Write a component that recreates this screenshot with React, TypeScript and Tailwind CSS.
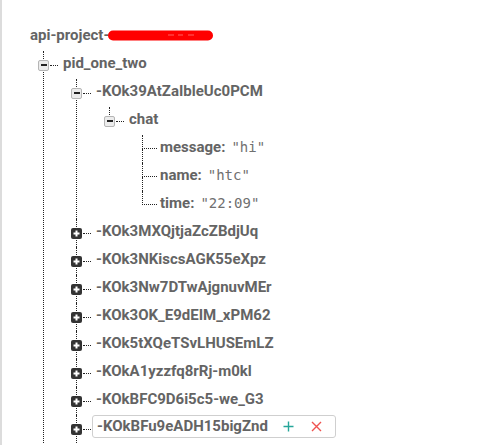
import { ReactNode } from 'react';

type TNode = {
  label: string;
  value?: string;
  open?: boolean;
  editing?: boolean;
  last?: boolean;
  children?: TNode[];
};

const keys = [
  '-KOk3MXQjtjaZcZBdjUq',
  '-KOk3NKiscsAGK55eXpz',
  '-KOk3Nw7DTwAjgnuvMEr',
  '-KOk3OK_E9dEIM_xPM62',
  '-KOk5tXQeTSvLHUSEmLZ',
  '-KOkA1yzzfq8rRj-m0kl',
  '-KOkBFC9D6i5c5-we_G3',
];

const tree: TNode = {
  label: 'pid_one_two',
  open: true,
  children: [
    {
      label: '-KOk39AtZaIbleUc0PCM',
      open: true,
      children: [
        {
          label: 'chat',
          open: true,
          last: true,
          children: [
            { label: 'message', value: '"hi"' },
            { label: 'name', value: '"htc"' },
            { label: 'time', value: '"22:09"', last: true },
          ],
        },
      ],
    },
    ...keys.map((k) => ({ label: k })),
    { label: '-KOkBFu9eADH15bigZnd', editing: true },
  ],
};

function Toggle({ open }: { open?: boolean }) {
  if (open) {
    return (
      <div className="-ml-[6px] flex h-[11px] w-[11px] shrink-0 items-center justify-center rounded-[2px] border border-[#b5b5b5] bg-[#ececec]">
        <div className="h-[2px] w-[6px] bg-[#222]" />
      </div>
    );
  }
  return (
    <div className="-ml-[6px] flex h-[11px] w-[11px] shrink-0 items-center justify-center rounded-[2px] bg-[#333]">
      <svg width="7" height="7" viewBox="0 0 7 7">
        <rect x="2.5" y="0.5" width="2" height="6" fill="#fff" />
        <rect x="0.5" y="2.5" width="6" height="2" fill="#fff" />
      </svg>
    </div>
  );
}

function Label({ children }: { children: ReactNode }) {
  return <span className="whitespace-nowrap font-bold text-[#646464]">{children}</span>;
}

function TreeNode({ node }: { node: TNode }) {
  if (node.value !== undefined) {
    return (
      <div className="flex">
        <div className="flex w-[15px] shrink-0 flex-col">
          <div className="h-[14px] border-b border-l border-dotted border-[#222]" />
          <div className={'flex-1 border-l border-dotted ' + (node.last ? 'border-transparent' : 'border-[#222]')} />
        </div>
        <div className="flex h-[28px] items-center pl-[3px]">
          <div className="mb-[4px] flex items-center">
            <Label>{node.label}:</Label>
            <span className="ml-[6px] whitespace-nowrap font-['DejaVu_Sans_Mono',monospace] text-[14px] text-[#707070]">
              {node.value}
            </span>
          </div>
        </div>
      </div>
    );
  }

  return (
    <div className="flex">
      <div className="flex w-0 shrink-0 flex-col">
        <div className="h-[14px] border-l border-dotted border-[#222]" />
        <div className={'flex-1 border-l border-dotted ' + (node.last ? 'border-transparent' : 'border-[#222]')} />
      </div>
      <div className="flex flex-col">
        <div className="flex h-[28px] items-center">
          <div className="ml-px" />
          <Toggle open={node.open} />
          <div className="ml-px w-[8px] border-t border-dotted border-[#222]" />
          {node.editing ? (
            <div className="mb-[5px] ml-[1px] flex h-[23px] w-[244px] items-center rounded-[3px] border border-[#cfcfcf] px-[4px]">
              <Label>{node.label}</Label>
              <span className="ml-auto text-[#26a69a]">
                <svg width="11" height="11" viewBox="0 0 11 11">
                  <path d="M5.5 0.5v10M0.5 5.5h10" stroke="currentColor" strokeWidth="1.4" />
                </svg>
              </span>
              <span className="ml-[17px] mr-[9px] text-[#ef5350]">
                <svg width="11" height="11" viewBox="0 0 11 11">
                  <path d="M1 1l9 9M10 1l-9 9" stroke="currentColor" strokeWidth="1.4" />
                </svg>
              </span>
            </div>
          ) : (
            <div className="mb-[4px] ml-[5px]">
              <Label>{node.label}</Label>
            </div>
          )}
        </div>
        {node.open && node.children && (
          <div className="ml-[33px] flex flex-col">
            {node.children.map((c) => (
              <TreeNode key={c.label} node={c} />
            ))}
          </div>
        )}
      </div>
    </div>
  );
}

export default function App() {
  return (
    <div className="h-[445px] w-[497px] overflow-hidden border-l-2 border-[#dcdcdc] bg-white font-['Roboto',sans-serif] text-[15px]">
      <div className="pl-[28px] pt-[23px] pb-[20px]">
        <div className="flex h-[28px] items-center">
          <div className="mb-[4px] flex items-center">
            <Label>api-project-</Label>
            <svg width="106" height="13" viewBox="0 0 106 13" className="-ml-[1px]">
              <path d="M5 6.5 H100" stroke="#f00" strokeWidth="10" strokeLinecap="round" />
              <path d="M60 6 h6 M70 6 h5 M80 6 h6" stroke="#ff3030" strokeWidth="2" />
            </svg>
          </div>
        </div>
        <div className="ml-[13px]">
          <TreeNode node={tree} />
        </div>
      </div>
    </div>
  );
}
